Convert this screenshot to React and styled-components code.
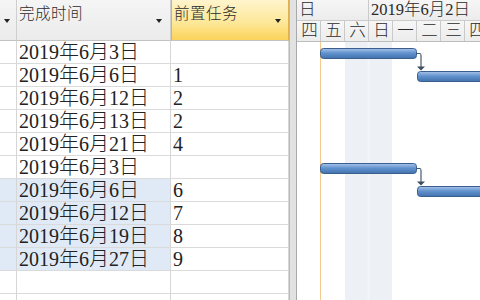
import React from "react";
import styled, { createGlobalStyle } from "styled-components";

const GlobalStyle = createGlobalStyle`
  html, body {
    margin: 0;
    padding: 0;
    background: #fff;
  }
  body {
    font-family: "Liberation Serif", "Noto Sans CJK SC", serif;
  }
`;

const Screen = styled.div`
  display: flex;
  width: 480px;
  height: 300px;
  overflow: hidden;
  background: #fff;
`;

const TablePane = styled.div`
  display: flex;
  flex-direction: column;
  width: 289px;
  flex: none;
`;

const HeaderRow = styled.div`
  display: grid;
  grid-template-columns: 17px 154px 118px;
  height: 41px;
  flex: none;
`;

const HeaderCell = styled.div`
  position: relative;
  box-sizing: border-box;
  padding: 3px 0 0 2px;
  font-family: "Noto Sans CJK SC", sans-serif;
  font-size: 15.5px;
  font-weight: 300;
  line-height: 18px;
  letter-spacing: 0.5px;
  color: #2a2a2a;
  border-bottom: 1px solid #c3c3c3;
  border-right: 1px solid ${({ $active }) => ($active ? "#e0b24f" : "#cfcfcf")};
  border-left: ${({ $active }) => ($active ? "1px solid #e0b24f" : "none")};
  background: ${({ $active }) =>
    $active
      ? "linear-gradient(#fff4cc 0%, #fde89a 55%, #fbd35a 100%)"
      : "linear-gradient(#f5f5f5, #ebebeb)"};
`;

const DropArrow = styled.span`
  position: absolute;
  right: ${({ $right }) => $right}px;
  top: 19px;
  width: 0;
  height: 0;
  border-left: 3.5px solid transparent;
  border-right: 3.5px solid transparent;
  border-top: 4px solid #222;
`;

const BodyRow = styled.div`
  display: grid;
  grid-template-columns: 17px 154px 118px;
  height: 23px;
  flex: none;
`;

const Cell = styled.div`
  box-sizing: border-box;
  padding-left: 2px;
  font-size: 20px;
  font-weight: 300;
  line-height: 22px;
  color: #222;
  white-space: nowrap;
  overflow: hidden;
  border-bottom: 1px solid #dadada;
  border-right: 1px solid #d6d6d6;
  background: ${({ $sel }) => ($sel ? "#e0eaf7" : "#fff")};
`;

const Splitter = styled.div`
  width: 6px;
  flex: none;
  background: #e2e2e2;
  border-left: 1px solid #b9b9b9;
  border-right: 1px solid #a9a9a9;
`;

const GanttPane = styled.div`
  display: flex;
  flex-direction: column;
  flex: 1;
  min-width: 0;
  overflow: hidden;
`;

const TimeRow = styled.div`
  display: flex;
  height: 20px;
  flex: none;
  background: linear-gradient(#f6f6f6, #ececec);
  border-bottom: 1px solid #cbcbcb;
`;

const TimeCell = styled.div`
  box-sizing: border-box;
  width: ${({ $w }) => $w}px;
  flex: none;
  padding-left: 2px;
  font-family: "Liberation Serif", "Noto Sans CJK SC", serif;
  font-size: 16.5px;
  font-weight: 300;
  line-height: 20px;
  color: #2a2a2a;
  white-space: nowrap;
  border-right: 1px solid #c9c9c9;
  text-align: ${({ $center }) => ($center ? "center" : "left")};
`;

const DayRow = styled(TimeRow)`
  border-bottom: 1px solid #bdbdbd;
`;

const ChartArea = styled.svg`
  display: block;
  flex: 1;
  width: 100%;
`;

const rows = [
  { date: "2019年6月3日", pre: "" },
  { date: "2019年6月6日", pre: "1" },
  { date: "2019年6月12日", pre: "2" },
  { date: "2019年6月13日", pre: "2" },
  { date: "2019年6月21日", pre: "4" },
  { date: "2019年6月3日", pre: "" },
  { date: "2019年6月6日", pre: "6", sel: true },
  { date: "2019年6月12日", pre: "7", sel: true },
  { date: "2019年6月19日", pre: "8", sel: true },
  { date: "2019年6月27日", pre: "9", sel: true },
  { date: "", pre: "" },
  { date: "", pre: "" },
];

const days = ["四", "五", "六", "日", "一", "二", "三", "四"];

const Bar = ({ x, y, w }) => (
  <rect x={x} y={y} width={w} height={10} rx={3} fill="url(#barFill)" stroke="#3a5f8f" strokeWidth="1" />
);

const Link = ({ x, y1, y2 }) => (
  <g>
    <path d={`M${x} ${y1} H${x + 3} Q${x + 4} ${y1} ${x + 4} ${y1 + 2} V${y2 - 4}`} fill="none" stroke="#4a5a6e" strokeWidth="1.2" />
    <path d={`M${x} ${y2 - 5} H${x + 8} L${x + 4} ${y2 - 1} Z`} fill="#3d4c5e" />
  </g>
);

const GanttChart = () => (
  <ChartArea viewBox="0 0 183 259" preserveAspectRatio="xMinYMin slice">
    <defs>
      <linearGradient id="barFill" x1="0" y1="0" x2="0" y2="1">
        <stop offset="0" stopColor="#a9c4e8" />
        <stop offset="0.45" stopColor="#6393cf" />
        <stop offset="1" stopColor="#4272ae" />
      </linearGradient>
    </defs>
    <rect x="48" y="0" width="47" height="259" fill="#edf0f5" />
    <line x1="71.5" y1="0" x2="71.5" y2="259" stroke="#f4f6f9" strokeWidth="2" />
    <line x1="23.5" y1="0" x2="23.5" y2="259" stroke="#f6c98e" strokeWidth="1" />
    <Bar x={23.5} y={6.5} w={96} />
    <Bar x={120.5} y={29.5} w={80} />
    <Link x={120} y1={11.5} y2={29.5} />
    <Bar x={23.5} y={121.5} w={96} />
    <Bar x={120.5} y={144.5} w={80} />
    <Link x={120} y1={126.5} y2={144.5} />
  </ChartArea>
);

export default function App() {
  return (
    <Screen>
      <GlobalStyle />
      <TablePane>
        <HeaderRow>
          <HeaderCell>
            <DropArrow $right={6} />
          </HeaderCell>
          <HeaderCell>
            完成时间
            <DropArrow $right={8} />
          </HeaderCell>
          <HeaderCell $active>
            前置任务
            <DropArrow $right={7} />
          </HeaderCell>
        </HeaderRow>
        {rows.map((r, i) => (
          <BodyRow key={i}>
            <Cell $sel={r.sel} />
            <Cell $sel={r.sel}>{r.date}</Cell>
            <Cell>{r.pre}</Cell>
          </BodyRow>
        ))}
      </TablePane>
      <Splitter />
      <GanttPane>
        <TimeRow>
          <TimeCell $w={72}>日</TimeCell>
          <TimeCell $w={168}>2019年6月2日</TimeCell>
        </TimeRow>
        <DayRow>
          {days.map((d, i) => (
            <TimeCell key={i} $w={24} $center>
              {d}
            </TimeCell>
          ))}
        </DayRow>
        <GanttChart />
      </GanttPane>
    </Screen>
  );
}
